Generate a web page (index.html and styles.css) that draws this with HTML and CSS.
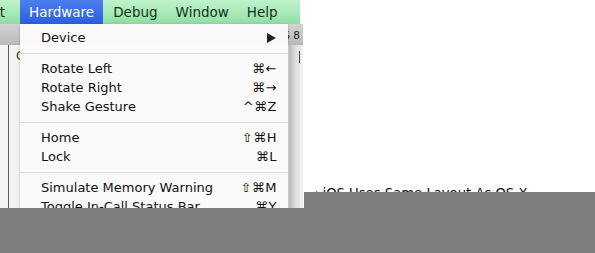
FILE: index.html
```html
<!DOCTYPE html>
<html lang="en">
<head>
    <meta charset="UTF-8">
    <title>Hardware menu</title>
    <link rel="stylesheet" href="styles.css">
</head>
<body>
    <div class="screen">
        <div class="menubar">
            <div class="menubar-stub"><span>Edit</span></div>
            <div class="menubar-item active">Hardware</div>
            <div class="menubar-item">Debug</div>
            <div class="menubar-item">Window</div>
            <div class="menubar-item">Help</div>
        </div>

        <div class="workspace">
            <div class="window">
                <div class="titlebar"><span class="title-text">iOS 8</span></div>
                <div class="win-body">
                    <div class="sidebar-line"></div>
                    <div class="win-content"><span class="cell-letter">C</span></div>
                    <div class="win-edge"><span class="edge-tick"></span></div>
                </div>
            </div>
            <div class="page">
                <p class="page-heading">&lsaquo; iOS Uses Same Layout As OS X</p>
            </div>
        </div>

        <!-- menu deroulant au-dessus de la fenetre -->
        <div class="dropdown">
            <div class="menu-row"><span>Device</span><span class="arrow"></span></div>
            <div class="menu-sep"></div>
            <div class="menu-row"><span>Rotate Left</span><span class="key">&#8984;&larr;</span></div>
            <div class="menu-row"><span>Rotate Right</span><span class="key">&#8984;&rarr;</span></div>
            <div class="menu-row"><span>Shake Gesture</span><span class="key">^&#8984;Z</span></div>
            <div class="menu-sep"></div>
            <div class="menu-row"><span>Home</span><span class="key">&#8679;&#8984;H</span></div>
            <div class="menu-row"><span>Lock</span><span class="key">&#8984;L</span></div>
            <div class="menu-sep"></div>
            <div class="menu-row"><span>Simulate Memory Warning</span><span class="key">&#8679;&#8984;M</span></div>
            <div class="menu-row"><span>Toggle In-Call Status Bar</span><span class="key">&#8984;Y</span></div>
        </div>

        <div class="cover cover-right"></div>
        <div class="cover cover-bottom"></div>
    </div>
</body>
</html>
```

FILE: styles.css
```css
body {
    margin: 0;
    background: #ffffff;
    font-family: 'DejaVu Sans', 'Liberation Sans', sans-serif;
    color: #111;
}

.screen {
    position: relative;
    width: 595px;
    height: 253px;
    overflow: hidden;
    display: flex;
    flex-direction: column;
}

.menubar {
    display: flex;
    width: 300px;
    height: 24px;
    background: linear-gradient(#bff3cb, #a4e8b4 60%, #8fdba2);
    font-size: 13.5px;
    color: #14301c;
}

.menubar-stub {
    width: 20px;
    overflow: hidden;
    display: flex;
    justify-content: flex-end;
    align-items: center;
}

.menubar-stub span {
    margin-right: 15px;
}

.menubar-item {
    display: flex;
    align-items: center;
    padding: 0 9px;
}

.menubar-item.active {
    background: linear-gradient(#4d7ff0, #2a5ee0);
    color: #fff;
    padding: 0 9px 0 9px;
    margin-right: 1px;
}

.workspace {
    display: flex;
    flex: 1;
}

.window {
    width: 303px;
    display: flex;
    flex-direction: column;
}

.titlebar {
    height: 21px;
    background: linear-gradient(#d4d4d4, #b8b8b8);
    display: flex;
    justify-content: flex-end;
    align-items: center;
    font-size: 10.5px;
    color: #222;
    overflow: hidden;
}

.title-text {
    margin-right: 3px;
}

.win-body {
    flex: 1;
    display: flex;
    background: #f3f3f3;
}

.sidebar-line {
    width: 1px;
    margin-left: 8px;
    background: #5a5a5a;
}

.win-content {
    flex: 1;
    padding: 4px 0 0 7px;
    font-size: 12px;
    color: #333;
}

.win-edge {
    width: 15px;
    background: linear-gradient(to right, #e2e2e2, #bdbdbd 2px, #dcdcdc 7px, #f4f4f4 15px);
    display: flex;
    justify-content: flex-end;
}

.edge-tick {
    width: 1px;
    height: 12px;
    margin: 6px 3px 0 0;
    background: #444;
}

.page {
    flex: 1;
    background: #fff;
}

.page-heading {
    margin: 0;
    padding: 161px 0 0 10px;
    font-size: 13.2px;
    line-height: 18px;
    color: #111;
}

.dropdown {
    position: absolute;
    left: 20px;
    top: 24px;
    width: 268px;
    padding-top: 4px;
    background: rgba(250, 250, 250, 0.98);
    box-shadow: 0 1px 3px rgba(0, 0, 0, 0.2);
    font-size: 13px;
    color: #111;
}

.menu-row {
    display: flex;
    justify-content: space-between;
    align-items: center;
    height: 19px;
    padding: 0 11px 0 21px;
}

.key {
    letter-spacing: 0.5px;
}

.arrow {
    width: 0;
    height: 0;
    margin-right: 1px;
    border-top: 5px solid transparent;
    border-bottom: 5px solid transparent;
    border-left: 9px solid #222;
}

.menu-sep {
    height: 1px;
    margin: 6px 0 5px;
    background: #dedede;
}

.cover {
    position: absolute;
    background: #7f7f7f;
}

.cover-right {
    left: 304px;
    right: 0;
    top: 192px;
    bottom: 0;
}

.cover-bottom {
    left: 0;
    right: 0;
    top: 208px;
    bottom: 0;
}
```
